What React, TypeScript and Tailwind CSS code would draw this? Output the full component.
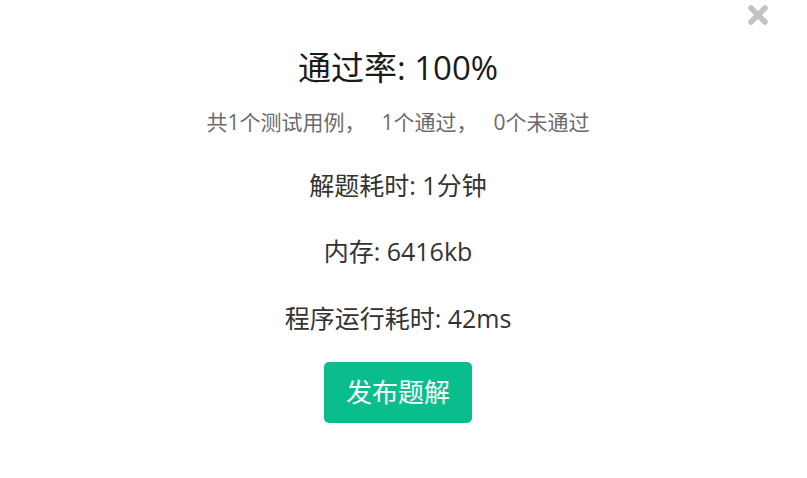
const font = { fontFamily: '"Open Sans", "Noto Sans CJK SC", sans-serif' };

const CloseIcon = () => (
  <svg width="22" height="22" viewBox="0 0 22 22" fill="none">
    <path d="M4 4 L18 18 M18 4 L4 18" stroke="#c2c2c2" strokeWidth="5.5" strokeLinecap="round" />
  </svg>
);

const ResultDialog = () => {
  return (
    <div className="relative w-[807px] h-[478px] bg-white" style={font}>
      <button className="absolute top-[4px] right-[38px] leading-none">
        <CloseIcon />
      </button>

      <div className="flex flex-col items-center pt-[48px] pr-[11px]">
        <h2 className="text-[33px] leading-[40px] text-[#1b1b1b] font-normal">通过率: 100%</h2>
        <p className="mt-[20px] text-[21px] leading-[28px] text-[#6b6b6b]">
          <span>共1个测试用例，</span>
          <span className="ml-[16px]">1个通过，</span>
          <span className="ml-[16px]">0个未通过</span>
        </p>
        <p className="mt-[33px] text-[25px] leading-[32px] text-[#333]">解题耗时: 1分钟</p>
        <p className="mt-[34px] text-[25px] leading-[32px] text-[#333]">内存: 6416kb</p>
        <p className="mt-[35px] text-[25px] leading-[32px] text-[#333]">程序运行耗时: 42ms</p>
        <button className="mt-[28px] w-[148px] h-[61px] rounded-[5px] bg-[#09be8c] text-white text-[26px]">
          发布题解
        </button>
      </div>
    </div>
  );
};

export default function App() {
  return <ResultDialog />;
}
